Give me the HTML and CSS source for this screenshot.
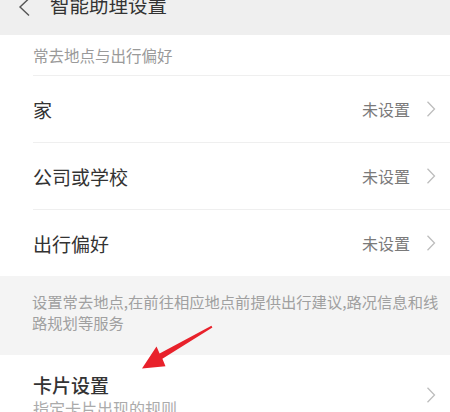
FILE: index.html
```html
<!DOCTYPE html>
<html lang="zh-CN">
<head>
<meta charset="utf-8">
<title>智能助理设置</title>
<link rel="stylesheet" href="styles.css">
</head>
<body>
<div class="page">
  <header class="header">
    <svg class="back" width="14" height="20" viewBox="0 0 14 20" aria-hidden="true">
      <polyline points="11,0.5 2,9 11,17.5" fill="none" stroke="#555" stroke-width="1.4" stroke-linejoin="miter"/>
    </svg>
    <div class="title">智能助理设置</div>
  </header>

  <section class="group">
    <div class="group-label">常去地点与出行偏好</div>
    <div class="row">
      <span class="row-text">家</span>
      <span class="row-value">未设置</span>
      <svg class="chev" width="10" height="16" viewBox="0 0 10 16" aria-hidden="true"><polyline points="1.5,0.8 8.5,8 1.5,15.2" fill="none" stroke="#bdbdbd" stroke-width="1.3"/></svg>
    </div>
    <div class="row">
      <span class="row-text">公司或学校</span>
      <span class="row-value">未设置</span>
      <svg class="chev" width="10" height="16" viewBox="0 0 10 16" aria-hidden="true"><polyline points="1.5,0.8 8.5,8 1.5,15.2" fill="none" stroke="#bdbdbd" stroke-width="1.3"/></svg>
    </div>
    <div class="row">
      <span class="row-text">出行偏好</span>
      <span class="row-value">未设置</span>
      <svg class="chev" width="10" height="16" viewBox="0 0 10 16" aria-hidden="true"><polyline points="1.5,0.8 8.5,8 1.5,15.2" fill="none" stroke="#bdbdbd" stroke-width="1.3"/></svg>
    </div>
  </section>

  <div class="note">设置常去地点,在前往相应地点前提供出行建议,路况信息和线<br>路规划等服务</div>

  <section class="card-row">
    <div class="card-text">
      <div class="card-title">卡片设置</div>
      <div class="card-sub">指定卡片出现的规则</div>
    </div>
    <svg class="chev chev-card" width="10" height="16" viewBox="0 0 10 16" aria-hidden="true"><polyline points="1.5,0.8 8.5,8 1.5,15.2" fill="none" stroke="#bdbdbd" stroke-width="1.3"/></svg>
  </section>

  <svg class="arrow" width="450" height="412" viewBox="0 0 450 412" aria-hidden="true">
    <polygon points="142,368.5 156.5,346.5 159.6,353.4 211.4,325.8 212.4,327.4 162.4,358.8 165.5,366.2" fill="#e8212b"/>
  </svg>
</div>
</body>
</html>
```

FILE: styles.css
```css
html, body {
  margin: 0;
  padding: 0;
  background: #ffffff;
}
body {
  font-family: "Noto Sans CJK SC", "Noto Sans", sans-serif;
  color: #333;
}
.page {
  position: relative;
  width: 450px;
  height: 412px;
  overflow: hidden;
}
.header {
  height: 35px;
  background: #efefef;
  display: flex;
  align-items: flex-start;
}
.back {
  margin-left: 18px;
  margin-top: -2px;
  flex: none;
}
.title {
  margin-left: 18px;
  margin-top: -5px;
  font-size: 19.5px;
  line-height: 20px;
  color: #333;
}
.group {
  background: #fff;
}
.group-label {
  height: 40px;
  line-height: 40px;
  padding-left: 33px;
  font-size: 15.5px;
  color: #9a9a9a;
}
.row {
  margin-left: 33px;
  border-top: 1px solid #efefef;
  height: 66px;
  display: flex;
  align-items: center;
  padding-right: 14px;
}
.row-text {
  flex: 1;
  font-size: 19px;
  color: #333;
}
.row-value {
  font-size: 16px;
  color: #7a7a7a;
  margin-right: 16px;
}
.chev {
  flex: none;
}
.note {
  background: #f4f4f4;
  padding: 15px 0 22px 32px;
  font-size: 15.3px;
  line-height: 21px;
  color: #a0a0a0;
  white-space: nowrap;
}
.card-row {
  display: flex;
  padding: 17px 14px 0 33px;
  background: #fff;
}
.card-text {
  flex: 1;
}
.card-title {
  font-size: 19px;
  line-height: 26px;
  color: #333;
  font-weight: 500;
}
.card-sub {
  font-size: 16px;
  line-height: 20px;
  color: #ababab;
}
.chev-card {
  margin-top: 15px;
}
.arrow {
  position: absolute;
  left: 0;
  top: 0;
  pointer-events: none;
}
```
